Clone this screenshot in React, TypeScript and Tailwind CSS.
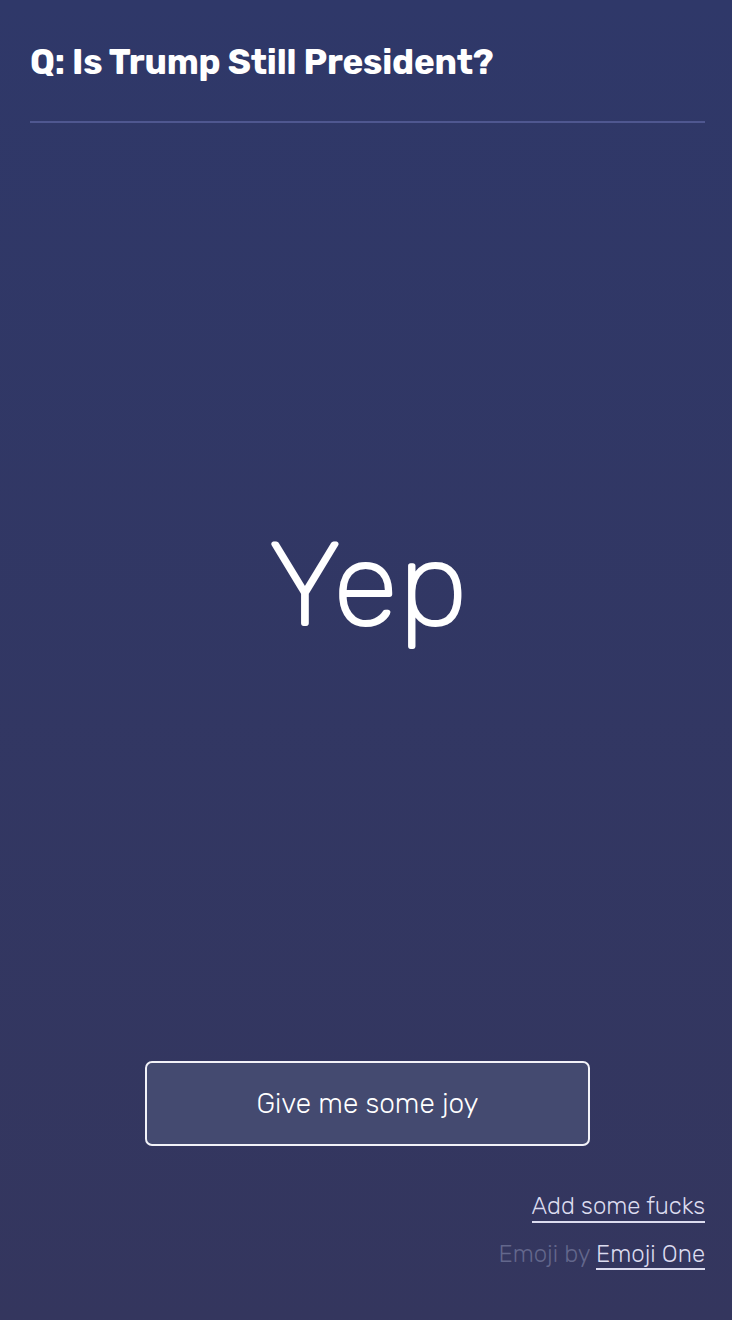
import React from "react";

export default function App() {
  return (
    <div
      className="min-h-[1320px] w-full flex flex-col bg-gradient-to-b from-[#2f3869] to-[#34365e] text-white pl-[30px] pr-[27px]"
      style={{ fontFamily: "Rubik, Inter, 'Open Sans', sans-serif" }}
    >
      <header className="pt-[38px] pb-[35px] border-b-2 border-[#4f5790]">
        <h1 className="text-[35px] leading-[48px] font-bold tracking-[-0.2px]">
          Q: Is Trump Still President?
        </h1>
      </header>
      <main className="flex-1 flex items-center justify-center">
        <div className="text-[120px] font-light leading-none mt-[-14px]">Yep</div>
      </main>
      <div className="flex justify-center">
        <button className="w-[445px] h-[85px] rounded-[7px] border-2 border-[#f2f2f8] bg-[#444a70] text-[28px] font-light text-white">
          Give me some joy
        </button>
      </div>
      <div className="flex flex-col items-end mt-[45px] pb-[51px] text-[24px] font-light">
        <a className="text-[#dcdcef] border-b-2 border-[#dcdcef] leading-[30px]">Add some fucks</a>
        <div className="mt-[16px] leading-[30px]">
          <span className="text-[#63678c]">Emoji by </span>
          <a className="text-[#dcdcef] border-b-2 border-[#dcdcef]">Emoji One</a>
        </div>
      </div>
    </div>
  );
}
